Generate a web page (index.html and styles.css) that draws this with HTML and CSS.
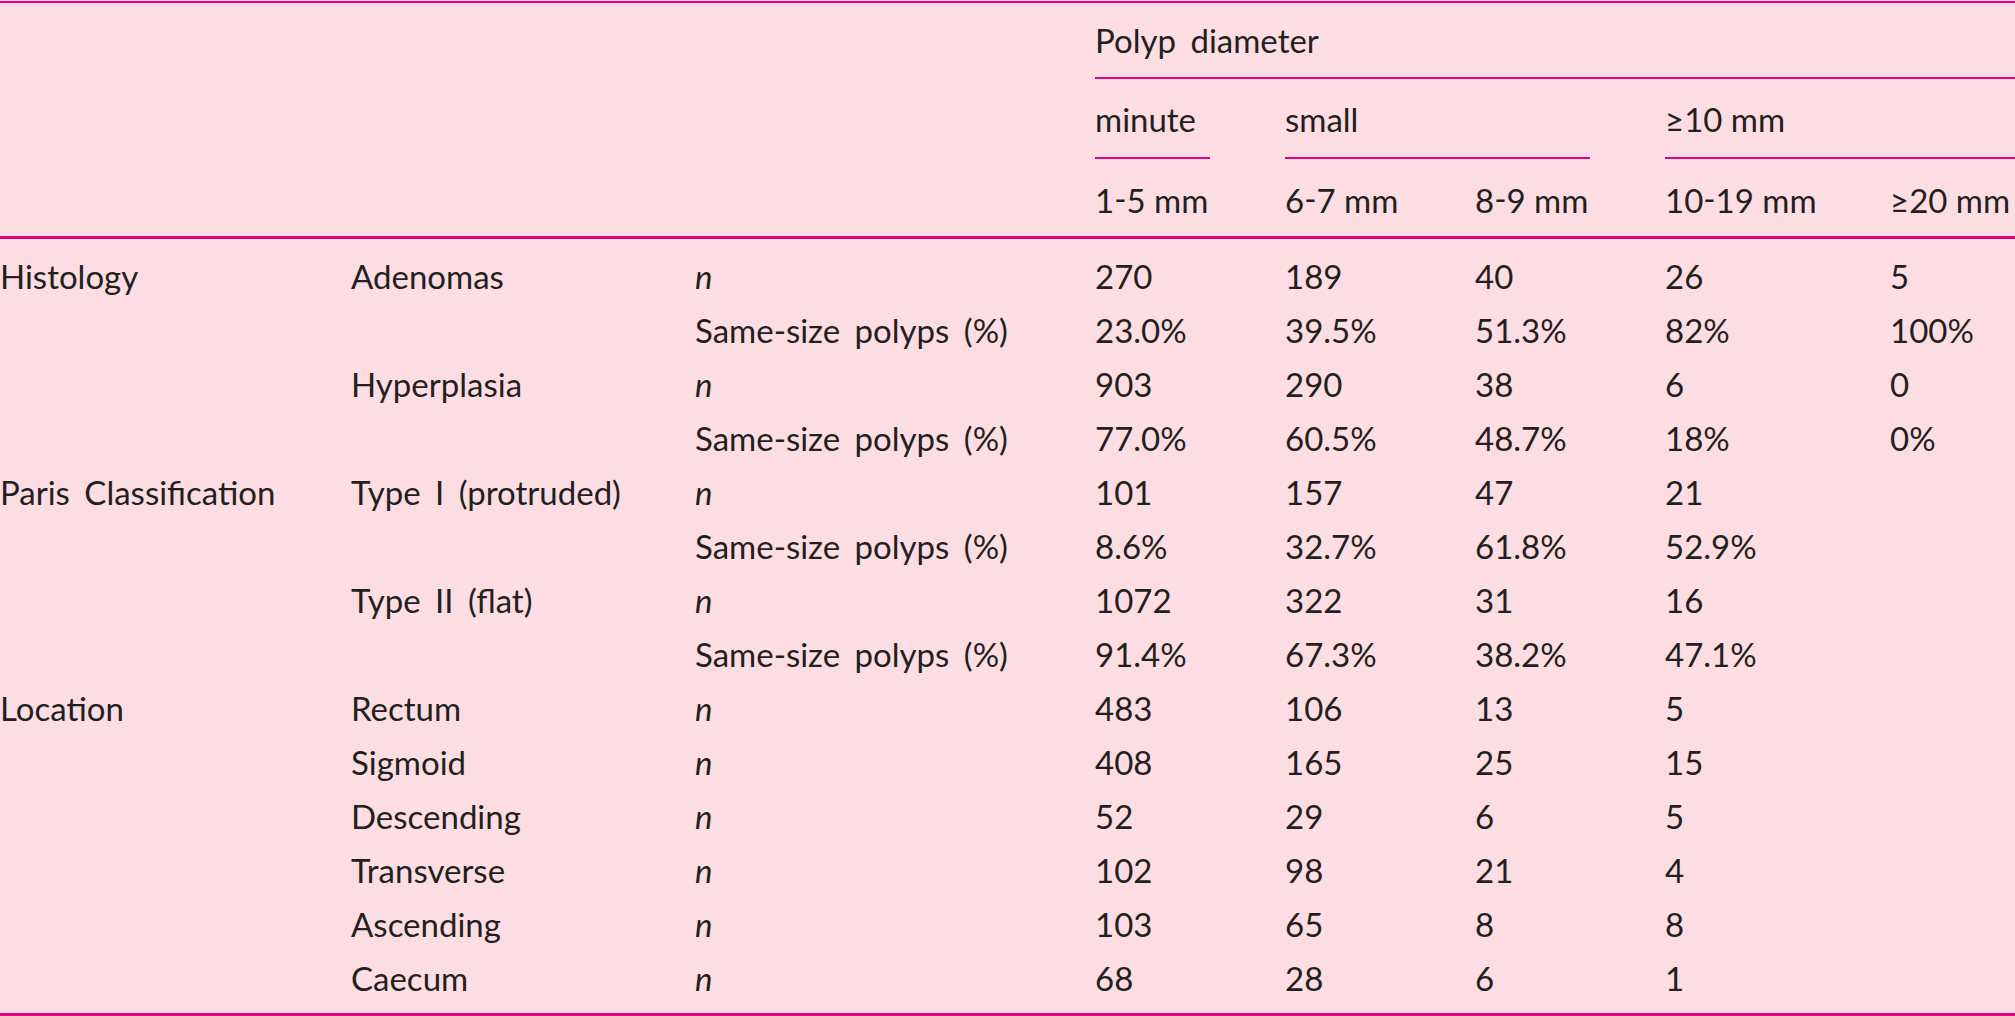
FILE: index.html
```html
<!DOCTYPE html>
<html lang="en">
<head>
<meta charset="utf-8">
<title>Polyp diameter table</title>
<link rel="stylesheet" href="styles.css">
</head>
<body>
<table class="tbl">
<colgroup>
<col class="c1"><col class="c2"><col class="c3"><col class="c4"><col class="c5"><col class="c6"><col class="c7"><col class="c8">
</colgroup>
<thead>
<tr>
<th class="blank" colspan="3" rowspan="3"></th>
<th class="top lbl" colspan="5">Polyp diameter</th>
</tr>
<tr>
<th class="grpcell"><div class="grp gap">minute</div></th>
<th class="grpcell" colspan="2"><div class="grp gap">small</div></th>
<th class="grpcell" colspan="2"><div class="grp">≥10 mm</div></th>
</tr>
<tr class="sub">
<th>1<span class="dash">-</span>5 mm</th>
<th>6<span class="dash">-</span>7 mm</th>
<th>8<span class="dash">-</span>9 mm</th>
<th>10<span class="dash">-</span>19 mm</th>
<th>≥20 mm</th>
</tr>
</thead>
<tbody>
<tr class="first"><td class="lbl">Histology</td><td class="lbl">Adenomas</td><td><i>n</i></td><td>270</td><td>189</td><td>40</td><td>26</td><td>5</td></tr>
<tr><td></td><td></td><td class="lbl">Same-size polyps (%)</td><td>23.0%</td><td>39.5%</td><td>51.3%</td><td>82%</td><td>100%</td></tr>
<tr><td></td><td class="lbl">Hyperplasia</td><td><i>n</i></td><td>903</td><td>290</td><td>38</td><td>6</td><td>0</td></tr>
<tr><td></td><td></td><td class="lbl">Same-size polyps (%)</td><td>77.0%</td><td>60.5%</td><td>48.7%</td><td>18%</td><td>0%</td></tr>
<tr><td class="lbl">Paris Classification</td><td class="lbl">Type I (protruded)</td><td><i>n</i></td><td>101</td><td>157</td><td>47</td><td>21</td><td></td></tr>
<tr><td></td><td></td><td class="lbl">Same-size polyps (%)</td><td>8.6%</td><td>32.7%</td><td>61.8%</td><td>52.9%</td><td></td></tr>
<tr><td></td><td class="lbl">Type II (flat)</td><td><i>n</i></td><td>1072</td><td>322</td><td>31</td><td>16</td><td></td></tr>
<tr><td></td><td></td><td class="lbl">Same-size polyps (%)</td><td>91.4%</td><td>67.3%</td><td>38.2%</td><td>47.1%</td><td></td></tr>
<tr><td class="lbl">Location</td><td class="lbl">Rectum</td><td><i>n</i></td><td>483</td><td>106</td><td>13</td><td>5</td><td></td></tr>
<tr><td></td><td class="lbl">Sigmoid</td><td><i>n</i></td><td>408</td><td>165</td><td>25</td><td>15</td><td></td></tr>
<tr><td></td><td class="lbl">Descending</td><td><i>n</i></td><td>52</td><td>29</td><td>6</td><td>5</td><td></td></tr>
<tr><td></td><td class="lbl">Transverse</td><td><i>n</i></td><td>102</td><td>98</td><td>21</td><td>4</td><td></td></tr>
<tr><td></td><td class="lbl">Ascending</td><td><i>n</i></td><td>103</td><td>65</td><td>8</td><td>8</td><td></td></tr>
<tr class="last"><td></td><td class="lbl">Caecum</td><td><i>n</i></td><td>68</td><td>28</td><td>6</td><td>1</td><td></td></tr>
</tbody>
</table>
</body>
</html>
```
FILE: styles.css
```css
html, body {
  margin: 0;
  padding: 0;
  background: #fcdde3;
  overflow: hidden;
}
body {
  padding-top: 1px;
  font-family: Lato, "Open Sans", sans-serif;
  font-size: 33px;
  color: #231f20;
}
.tbl {
  table-layout: fixed;
  width: 2090px;
  border-collapse: separate;
  border-spacing: 0;
  border-top: 2px solid #e5007d;
}
.c1 { width: 351px; }
.c2 { width: 344px; }
.c3 { width: 400px; }
.c4 { width: 190px; }
.c5 { width: 190px; }
.c6 { width: 190px; }
.c7 { width: 225px; }
.c8 { width: 200px; }

th, td {
  padding: 0;
  text-align: left;
  font-weight: 400;
  line-height: 40px;
  vertical-align: top;
  white-space: nowrap;
}
.lbl { word-spacing: 6px; }
.dash {
  position: relative;
  top: -2px;
}

.blank {
  border-bottom: 3px solid #e5007d;
}
.top {
  padding: 16.5px 0 17.5px;
  border-bottom: 2px solid #e5007d;
}
.grp {
  padding: 20px 0 18px;
  border-bottom: 2px solid #e5007d;
}
.grp.gap { margin-right: 75px; }
.sub th {
  padding: 20.5px 0 16.5px;
  border-bottom: 3px solid #e5007d;
}

tbody td {
  padding: 7px 0;
}
tbody tr.first td { padding-top: 16.5px; }
tbody tr.last td {
  padding-bottom: 15.5px;
  border-bottom: 3px solid #e5007d;
}
```
